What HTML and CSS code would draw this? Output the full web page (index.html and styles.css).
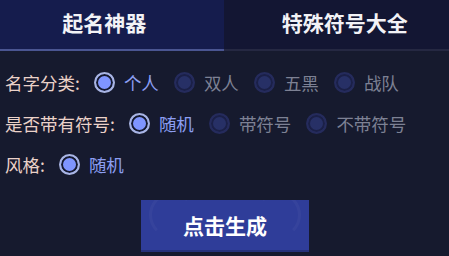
FILE: index.html
```html
<!DOCTYPE html>
<html lang="zh">
<head>
    <meta charset="UTF-8">
    <meta name="viewport" content="width=device-width, initial-scale=1.0">
    <title>起名神器</title>
    <link rel="stylesheet" href="styles.css">
</head>
<body>
    <nav class="tabs">
        <div class="tab active">起名神器</div>
        <div class="tab">特殊符号大全</div>
    </nav>

    <div class="options">
        <div class="row">
            <span class="label">名字分类:</span>
            <label class="radio checked"><i></i>个人</label>
            <label class="radio"><i></i>双人</label>
            <label class="radio"><i></i>五黑</label>
            <label class="radio"><i></i>战队</label>
        </div>
        <div class="row">
            <span class="label">是否带有符号:</span>
            <label class="radio checked"><i></i>随机</label>
            <label class="radio"><i></i>带符号</label>
            <label class="radio"><i></i>不带符号</label>
        </div>
        <div class="row">
            <span class="label">风格:</span>
            <label class="radio checked"><i></i>随机</label>
        </div>
    </div>

    <div class="actions">
        <button class="generate">点击生成</button>
    </div>
</body>
</html>
```

FILE: styles.css
```css
body {
    margin: 0;
    background-color: #161a2e;
    font-family: "Noto Sans CJK SC", "Noto Sans", sans-serif;
    overflow: hidden;
}
.tabs {
    display: flex;
    height: 51px;
}
.tab {
    flex: 1;
    display: flex;
    align-items: center;
    justify-content: center;
    font-size: 21px;
    font-weight: bold;
    color: #f2f2f6;
    background-color: #131633;
    border-bottom: 2px solid #252842;
    padding-left: 17px;
    padding-bottom: 5px;
}
.tab.active {
    background-color: #151c4d;
    border-bottom-color: #4a5591;
    padding-left: 0;
    padding-right: 15px;
}
.options {
    padding: 11px 0 0 5px;
}
.row {
    display: flex;
    align-items: center;
    height: 41px;
}
.label {
    font-size: 17.5px;
    color: #ebd2c9;
    margin-right: 14px;
}
.radio {
    display: flex;
    align-items: center;
    font-size: 17.5px;
    color: #7d8194;
    margin-right: 15px;
}
.radio i {
    width: 17px;
    height: 17px;
    border-radius: 50%;
    border: 2px solid #252b5c;
    background-color: #273066;
    box-shadow: inset 0 0 0 2px #1b2047;
    margin-right: 9px;
}
.radio.checked {
    color: #8c9ef2;
}
.radio.checked i {
    border-color: #a9b5e3;
    background-color: #7f95ff;
    box-shadow: inset 0 0 0 2px #161a2e;
}
.actions {
    display: flex;
    justify-content: center;
    padding-top: 15px;
}
.generate {
    position: relative;
    width: 168px;
    height: 52px;
    border: none;
    border-bottom: 2px solid #26317a;
    background-color: #2f3d99;
    color: #ffffff;
    font-family: "Noto Sans CJK SC", sans-serif;
    font-size: 21px;
    font-weight: bold;
    overflow: hidden;
    margin-left: 1px;
}
.generate::before,
.generate::after {
    content: "";
    position: absolute;
    top: -8px;
    width: 40px;
    height: 40px;
    border-radius: 50%;
    border: 3px solid rgba(255, 255, 255, 0.035);
}
.generate::before {
    left: 8px;
    border-right-color: transparent;
    border-bottom-color: transparent;
}
.generate::after {
    right: 8px;
    border-left-color: transparent;
    border-bottom-color: transparent;
}
```
